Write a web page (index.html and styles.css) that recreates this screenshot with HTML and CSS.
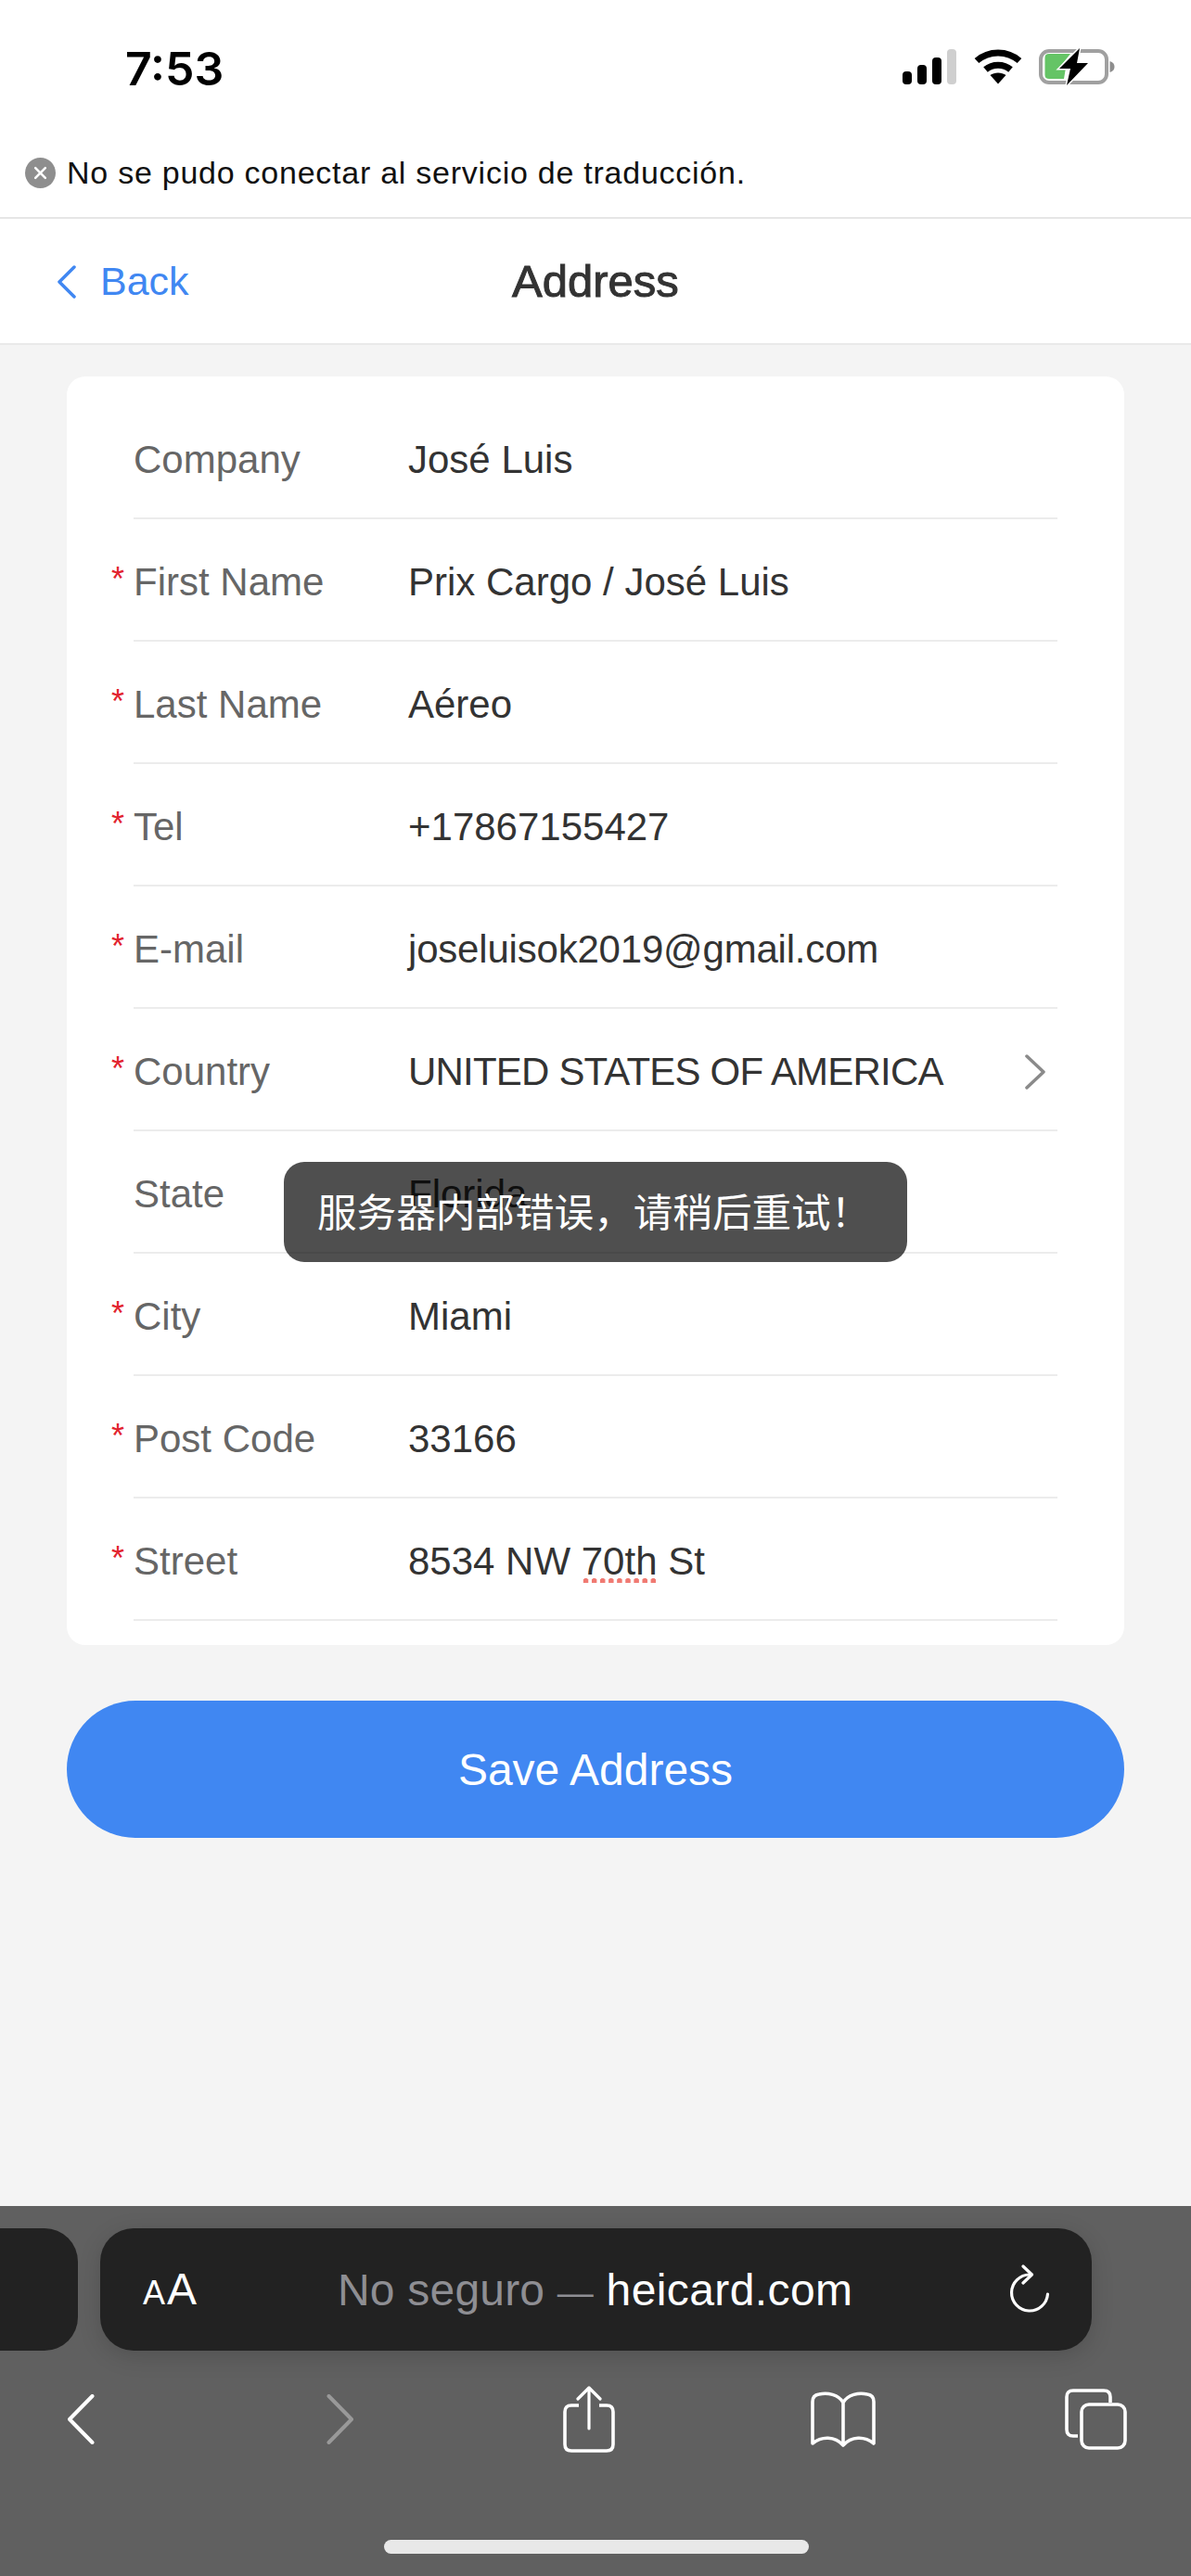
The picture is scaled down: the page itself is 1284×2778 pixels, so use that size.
FILE: index.html
```html
<!DOCTYPE html>
<html lang="en">
<head>
    <meta charset="UTF-8">
    <meta name="viewport" content="width=device-width, initial-scale=1.0">
    <title>Address</title>
    <link rel="stylesheet" href="styles.css">
</head>
<body>
    <div class="phone">
        <header class="status-bar">
            <span class="time">7:53</span>
            <div class="status-icons">
                <svg class="ic-signal" viewBox="0 0 58 38">
                    <rect x="0" y="24" width="10" height="14" rx="4" fill="#000"/>
                    <rect x="16" y="17" width="10" height="21" rx="4" fill="#000"/>
                    <rect x="32" y="9" width="10" height="29" rx="4" fill="#000"/>
                    <rect x="48" y="0" width="10" height="38" rx="4" fill="#cfcfcf"/>
                </svg>
                <svg class="ic-wifi" viewBox="0 0 52 38">
                    <path d="M3 12.500 C16 1 36 1 49 12.500" fill="none" stroke="#000" stroke-width="7"/>
                    <path d="M12.500 22 C20 15.500 32 15.500 39.500 22" fill="none" stroke="#000" stroke-width="7"/>
                    <path d="M17.500 28 C22 24.500 30 24.500 34.500 28 L26 37.500 Z" fill="#000"/>
                </svg>
                <svg class="ic-battery" viewBox="0 0 82 40">
                    <rect x="2" y="3" width="71" height="34" rx="9" fill="none" stroke="#a0a0a0" stroke-width="4"/>
                    <path d="M76.500 14 C80 15 81.500 17 81.500 20 C81.500 23 80 25 76.500 26 Z" fill="#8e8e8e"/>
                    <path d="M11 6 H34 L22 21 H29 L27 33 H11 Q6.500 33 6.500 29 V10 Q6.500 6 11 6 Z" fill="#65c466"/>
                    <path d="M44 0 L22 22 H34 L30 40 L53 16 H41 Z" fill="#000" stroke="#fff" stroke-width="3" paint-order="stroke"/>
                </svg>
            </div>
        </header>

        <div class="translate-bar">
            <svg class="ic-error" viewBox="0 0 34 34">
                <circle cx="17" cy="17" r="17" fill="#8e8e8e"/>
                <path d="M11.500 11.500 L22.500 22.500 M22.500 11.500 L11.500 22.500" stroke="#fff" stroke-width="2.600" stroke-linecap="round"/>
            </svg>
            <span>No se pudo conectar al servicio de traducción.</span>
        </div>

        <nav class="nav-bar">
            <a class="back">
                <svg class="ic-back" viewBox="0 0 22 36">
                    <path d="M19 2 L3 18 L19 34" fill="none" stroke="#4087f2" stroke-width="3.500" stroke-linecap="round" stroke-linejoin="round"/>
                </svg>
                Back
            </a>
            <h1 class="nav-title">Address</h1>
        </nav>

        <main class="content">
            <div class="card">
                <div class="row"><span class="label">Company</span><span class="value">José Luis</span></div>
                <div class="row"><span class="label req">First Name</span><span class="value">Prix Cargo / José Luis</span></div>
                <div class="row"><span class="label req">Last Name</span><span class="value">Aéreo</span></div>
                <div class="row"><span class="label req">Tel</span><span class="value">+17867155427</span></div>
                <div class="row"><span class="label req">E-mail</span><span class="value mail">joseluisok2019@gmail.com</span></div>
                <div class="row">
                    <span class="label req">Country</span><span class="value caps">UNITED STATES OF AMERICA</span>
                    <svg class="ic-more" viewBox="0 0 24 38">
                        <path d="M3 2 L21 19 L3 36" fill="none" stroke="#8a8a8a" stroke-width="3.500" stroke-linecap="round" stroke-linejoin="round"/>
                    </svg>
                </div>
                <div class="row"><span class="label">State</span><span class="value">Florida</span></div>
                <div class="row"><span class="label req">City</span><span class="value">Miami</span></div>
                <div class="row"><span class="label req">Post Code</span><span class="value">33166</span></div>
                <div class="row"><span class="label req">Street</span><span class="value">8534 NW <span class="spell">70th</span> St</span></div>
            </div>
            <button class="save-btn">Save Address</button>
        </main>

        <div class="toast">服务器内部错误，请稍后重试！</div>

        <footer class="safari">
            <div class="url-row">
                <div class="tab-prev"></div>
                <div class="url-bar">
                    <span class="aa"><span class="aa-small">A</span>A</span>
                    <span class="url"><span class="url-dim">No seguro <span class="url-dash">—</span> </span><span class="url-host">heicard.com</span></span>
                    <svg class="ic-reload" viewBox="0 0 44 54">
                        <path d="M22 11 A19.500 19.500 0 1 0 41.500 32" fill="none" stroke="#fff" stroke-width="3.200" stroke-linecap="round"/>
                        <path d="M15 2 L24.500 11 L15 20" fill="none" stroke="#fff" stroke-width="3.200" stroke-linecap="round" stroke-linejoin="round"/>
                    </svg>
                </div>
            </div>
            <div class="toolbar">
                <svg class="tool-back" viewBox="0 0 30 54">
                    <path d="M27.500 2 L3 27 L27.500 52" fill="none" stroke="#fff" stroke-width="4" stroke-linecap="round" stroke-linejoin="round"/>
                </svg>
                <svg class="tool-forward" viewBox="0 0 30 54">
                    <path d="M2.500 2 L27 27 L2.500 52" fill="none" stroke="#999" stroke-width="4" stroke-linecap="round" stroke-linejoin="round"/>
                </svg>
                <svg class="tool-share" viewBox="0 0 56 72">
                    <path d="M17 21 H9 Q2 21 2 28 V63 Q2 70 9 70 H47 Q54 70 54 63 V28 Q54 21 47 21 H39" fill="none" stroke="#fff" stroke-width="3.600"/>
                    <path d="M28 46 V2 M16 14 L28 2 L40 14" fill="none" stroke="#fff" stroke-width="3.200" stroke-linecap="round" stroke-linejoin="round"/>
                </svg>
                <svg class="tool-book" viewBox="0 0 70 60">
                    <path d="M35 12 C30 3 18 1 9 3 Q2 4 2 11 V56 C12 48 26 48 35 58 C44 48 58 48 68 56 V11 Q68 4 61 3 C52 1 40 3 35 12 Z M35 12 V58" fill="none" stroke="#fff" stroke-width="3.600" stroke-linejoin="round"/>
                </svg>
                <svg class="tool-tabs" viewBox="0 0 67 66">
                    <path d="M14 51 H9 Q2 51 2 44 V9 Q2 2 9 2 H42 Q49 2 49 9 V15" fill="none" stroke="#fff" stroke-width="3.600"/>
                    <rect x="18" y="17" width="47" height="47" rx="8" fill="none" stroke="#fff" stroke-width="3.600"/>
                </svg>
            </div>
            <div class="home-indicator"></div>
        </footer>
    </div>
</body>
</html>
```

FILE: styles.css
```css
* {
    box-sizing: border-box;
}

body {
    font-family: "Liberation Sans", Arial, "Noto Sans CJK SC", sans-serif;
    margin: 0;
    padding: 0;
    background-color: #f4f4f4;
}

svg {
    display: block;
    flex: none;
}

.phone {
    position: relative;
    width: 1284px;
    height: 2778px;
    display: flex;
    flex-direction: column;
    overflow: hidden;
}

/* status bar */
.status-bar {
    height: 140px;
    background-color: #fff;
    display: flex;
    justify-content: space-between;
    padding: 53px 82px 0 135px;
}

.time {
    font-family: Inter, "Liberation Sans", sans-serif;
    font-size: 50px;
    font-weight: 600;
    line-height: 42px;
    color: #000;
}

.status-icons {
    display: flex;
    align-items: flex-start;
}

.ic-signal {
    width: 58px;
    height: 38px;
    margin-right: 19px;
}

.ic-wifi {
    width: 52px;
    height: 38px;
    margin-right: 18px;
}

.ic-battery {
    width: 82px;
    height: 40px;
    margin-top: -1px;
}

/* translate message */
.translate-bar {
    height: 96px;
    background-color: #fff;
    border-bottom: 2px solid #e6e6e6;
    display: flex;
    align-items: center;
    gap: 12px;
    padding: 0 0 2px 27px;
    font-size: 34px;
    letter-spacing: 0.75px;
    color: #111;
}

.ic-error {
    width: 33px;
    height: 33px;
}

/* nav */
.nav-bar {
    position: relative;
    height: 136px;
    background-color: #fff;
    border-bottom: 2px solid #e9e9e9;
    display: flex;
    align-items: center;
    justify-content: center;
}

.back {
    position: absolute;
    left: 61px;
    top: 43px;
    display: flex;
    align-items: center;
    gap: 25px;
    font-size: 43px;
    color: #4087f2;
}

.ic-back {
    width: 22px;
    height: 36px;
}

.nav-title {
    margin: 0;
    font-size: 49px;
    font-weight: 500;
    color: #333;
    -webkit-text-stroke: 1px #333;
}

/* form */
.content {
    flex: 1;
    padding: 34px 72px 0;
}

.card {
    background-color: #fff;
    border-radius: 20px;
    padding: 22px 72px 26px;
}

.row {
    height: 132px;
    display: flex;
    align-items: center;
    border-bottom: 2px solid #ececec;
    padding-top: 6px;
    font-size: 42px;
}

.label {
    position: relative;
    width: 296px;
    color: #666;
}

.req::before {
    content: "*";
    position: absolute;
    left: -24px;
    top: 0;
    font-size: 36px;
    color: #e2232e;
}

.value {
    flex: 1;
    color: #333;
}

.caps {
    letter-spacing: -0.8px;
}

.mail {
    letter-spacing: -0.2px;
}

.spell {
    background: radial-gradient(circle, #f07a72 2.800px, transparent 3.200px) left bottom -1px / 9.100px 6px repeat-x;
}

.ic-more {
    width: 24px;
    height: 38px;
    margin-right: 12px;
}

.save-btn {
    display: block;
    width: 100%;
    height: 148px;
    margin-top: 60px;
    border: none;
    border-radius: 74px;
    background-color: #4087f2;
    color: #fff;
    font-family: inherit;
    font-size: 48px;
}

.toast {
    position: absolute;
    left: 306px;
    top: 1253px;
    width: 672px;
    height: 108px;
    padding-left: 36px;
    border-radius: 22px;
    background-color: rgba(0, 0, 0, 0.69);
    color: #fff;
    font-family: "Noto Sans CJK SC", sans-serif;
    font-size: 42.600px;
    line-height: 104px;
    white-space: nowrap;
}

/* safari chrome */
.safari {
    height: 399px;
    background-color: #606060;
    padding-top: 24px;
}

.url-row {
    display: flex;
    gap: 24px;
}

.tab-prev {
    width: 84px;
    height: 132px;
    background-color: #222;
    border-radius: 0 36px 36px 0;
}

.url-bar {
    width: 1069px;
    height: 132px;
    padding: 0 45px 0 46px;
    background-color: #222;
    border-radius: 36px;
    box-shadow: 0 6px 24px rgba(0, 0, 0, 0.15);
    display: flex;
    align-items: center;
    color: #fff;
}

.aa {
    width: 210px;
    font-size: 48px;
    line-height: 1;
}

.aa-small {
    font-size: 36px;
    margin-right: 2px;
}

.url {
    flex: 1;
    font-size: 48px;
    white-space: nowrap;
}

.url-dim {
    color: #8e8e93;
    letter-spacing: 0.2px;
}

.url-dash {
    font-size: 39px;
}

.url-host {
    letter-spacing: 0.4px;
}

.ic-reload {
    width: 44px;
    height: 54px;
}

.toolbar {
    height: 74px;
    margin-top: 37px;
    padding-left: 72px;
    display: flex;
    align-items: center;
}

.tool-back,
.tool-forward {
    width: 30px;
    height: 54px;
}

.tool-forward {
    margin-left: 250px;
}

.tool-share {
    width: 56px;
    height: 72px;
    margin-left: 225px;
}

.tool-book {
    width: 70px;
    height: 60px;
    margin-left: 211px;
}

.tool-tabs {
    width: 67px;
    height: 66px;
    margin-left: 204px;
}

.home-indicator {
    width: 458px;
    height: 15px;
    margin: 93px 0 0 414px;
    background-color: #e8e8e8;
    border-radius: 8px;
}
```
